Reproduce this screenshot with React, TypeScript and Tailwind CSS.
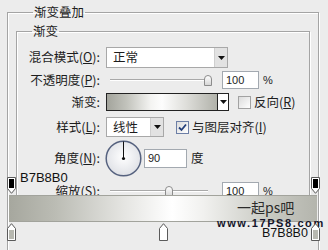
import React from 'react';

const cjk = "font-['Noto_Sans_CJK_SC',sans-serif]";
const latin = "font-['Liberation_Sans',Arial,sans-serif]";

function Caret() {
  return (
    <svg width="7" height="4" viewBox="0 0 7 4">
      <path d="M0 0 H7 L3.5 4 Z" fill="#111" />
    </svg>
  );
}

function Dropdown({ className, value }: { className: string; value: string }) {
  return (
    <div className={`flex h-full border border-[#a8a8a8] bg-white ${className}`}>
      <div className="flex flex-1 items-center pl-[6px] text-[12.5px]">{value}</div>
      <div className="flex w-[13px] items-center justify-center border-l border-[#cfcfcf] bg-[#e2e2e2]">
        <Caret />
      </div>
    </div>
  );
}

function Slider({ thumb }: { thumb: string }) {
  return (
    <div className="relative h-full w-[106px]">
      <div className="absolute left-[4px] right-[4px] top-[8px] h-[2px] border-t border-[#a9a9a9] border-b border-b-white" />
      <div className={`absolute top-[4px] h-[11px] w-[8px] rounded-t-full border border-[#8c8c8c] bg-gradient-to-b from-white to-[#d6d6d6] ${thumb}`} />
    </div>
  );
}

function Field({ value, className }: { value: string; className: string }) {
  return (
    <div className={`flex items-center border border-[#a3a9b0] bg-white pl-[3px] text-[11px] ${latin} ${className}`}>
      {value}
    </div>
  );
}

function Checkbox({ checked }: { checked?: boolean }) {
  return (
    <div
      className={`flex h-[13px] w-[13px] items-center justify-center border bg-gradient-to-br from-[#dcdcdc] to-white ${
        checked ? 'border-[#6d7fa6]' : 'border-[#a2a2a2]'
      }`}
    >
      {checked && (
        <svg width="9" height="9" viewBox="0 0 9 9">
          <path d="M1 4.5 L3.5 7 L8 1.5" fill="none" stroke="#233f7a" strokeWidth="1.8" />
        </svg>
      )}
    </div>
  );
}

function Dial() {
  return (
    <svg width="37" height="37" viewBox="0 0 37 37">
      <defs>
        <radialGradient id="dialFill" cx="50%" cy="45%" r="55%">
          <stop offset="0%" stopColor="#ffffff" />
          <stop offset="100%" stopColor="#dfe1e6" />
        </radialGradient>
      </defs>
      <circle cx="18.5" cy="18.5" r="17.3" fill="url(#dialFill)" stroke="#56627f" strokeWidth="1.5" />
      <line x1="18.5" y1="18.5" x2="18.5" y2="1.5" stroke="#111" strokeWidth="1" />
      <circle cx="18.5" cy="18.5" r="1.6" fill="#111" />
    </svg>
  );
}

function TopStop() {
  return (
    <svg width="9" height="17" viewBox="0 0 9 17">
      <path d="M0.5 0.5 H8.5 V11.5 L4.5 16.3 L0.5 11.5 Z" fill="#fff" stroke="#5a5a5a" />
      <rect x="2" y="2" width="5" height="9" fill="#000" />
    </svg>
  );
}

function BottomStop({ fill }: { fill: string }) {
  return (
    <svg width="9" height="18" viewBox="0 0 9 18">
      <path d="M4.5 0.7 L8.5 5.5 V17.5 H0.5 V5.5 Z" fill="#fff" stroke="#5a5a5a" />
      <rect x="2" y="7" width="5" height="9" fill={fill} />
    </svg>
  );
}

const Label = ({ children }: { children: React.ReactNode }) => (
  <div className="flex w-[83px] items-center justify-end text-[12.5px] leading-none">{children}</div>
);

const U = ({ c }: { c: string }) => <span className="underline underline-offset-[1px]">{c}</span>;

export default function App() {
  return (
    <div className={`relative h-[250px] w-[328px] overflow-hidden bg-[#ececec] text-[#1d1d1d] ${cjk}`}>
      <div className="pl-[7px] pr-[9px] pt-[5px]">
        <fieldset className="h-[270px] border border-[#a4a4a4] px-[8px] shadow-[inset_1px_1px_0_#fff,1px_1px_0_#fff]">
          <legend className="ml-[17px] px-[1px] text-[12.5px] leading-[14px]">渐变叠加</legend>
          <fieldset className="mt-[5px] h-[260px] border border-[#a4a4a4] shadow-[inset_1px_1px_0_#fff,1px_1px_0_#fff]">
            <legend className="ml-[15px] px-[1px] text-[12.5px] leading-[14px]">渐变</legend>

            <div className="mt-[9px] flex flex-col">
              <div className="flex h-[21px] gap-[6px]">
                <Label>混合模式(<U c="O" />):</Label>
                <Dropdown className="w-[122px]" value="正常" />
              </div>

              <div className="mt-[3px] flex h-[18px] gap-[6px]">
                <Label>不透明度(<U c="P" />):</Label>
                <Slider thumb="left-[98px]" />
                <Field className="ml-[4px] h-full w-[37px]" value="100" />
                <span className={`ml-[-2px] flex items-center text-[11px] ${latin}`}>%</span>
              </div>

              <div className="mt-[4px] flex h-[18px] items-center">
                <Label>渐变:</Label>
                <div className="ml-[6px] flex h-full w-[123px] border border-[#222]">
                  <div className="flex-1 bg-[linear-gradient(to_right,#a3a49c_0%,#c2c3bc_18%,#f4f4f2_40%,#fdfdfd_50%,#dededa_72%,#b1b2aa_100%)]" />
                  <div className="flex w-[11px] items-center justify-center border-l border-[#222] bg-white">
                    <Caret />
                  </div>
                </div>
                <div className="ml-[9px]">
                  <Checkbox />
                </div>
                <span className="ml-[3px] text-[12.5px] leading-none">
                  反向(<U c="R" />)
                </span>
              </div>

              <div className="mt-[6px] flex h-[20px] items-center">
                <Label>样式(<U c="L" />):</Label>
                <Dropdown className="ml-[6px] w-[58px]" value="线性" />
                <div className="ml-[12px]">
                  <Checkbox checked />
                </div>
                <span className="ml-[3px] text-[12.5px] leading-none">
                  与图层对齐(<U c="I" />)
                </span>
              </div>

              <div className="mt-[3px] flex h-[36px] items-center">
                <Label>角度(<U c="N" />):</Label>
                <div className="ml-[5px]">
                  <Dial />
                </div>
                <Field className="ml-[2px] h-[19px] w-[43px]" value="90" />
                <span className="ml-[4px] text-[12.5px] leading-none">度</span>
              </div>

              <div className="mt-[6px] flex h-[18px] gap-[6px]">
                <Label>缩放(<U c="S" />):</Label>
                <Slider thumb="left-[59px]" />
                <Field className="ml-[4px] h-full w-[37px]" value="100" />
                <span className={`ml-[-2px] flex items-center text-[11px] ${latin}`}>%</span>
              </div>
            </div>
          </fieldset>
        </fieldset>
      </div>

      {/* gradient editor strip pasted over the dialog */}
      <div className="absolute left-[9px] top-[222px] h-[28px] w-[308px] bg-[#ececec]" />
      <div className={`absolute left-[20px] top-[171px] text-[13px] leading-[13px] text-[#111] ${latin}`}>B7B8B0</div>
      <div className="absolute left-[7px] top-[177px]">
        <TopStop />
      </div>
      <div className="absolute left-[311px] top-[177px]">
        <TopStop />
      </div>
      <div className="absolute left-[9px] top-[195px] h-[27px] w-[308px] border-y border-[#a2a39c] bg-[linear-gradient(to_right,#a6a79e_0%,#bbbcb4_15%,#e6e6e3_38%,#ffffff_53%,#f1f1ef_63%,#c9cac3_84%,#b4b5ad_100%)]" />
      <div className="absolute left-[237px] top-[200px] text-[14px] leading-[15px] text-[#2b2b2b]">一起ps吧</div>
      <div className={`absolute left-[217px] top-[219px] text-[11px] font-black leading-[8px] tracking-[1.6px] text-[#14142a] ${latin}`}>
        www.17PS8.com
      </div>
      <div className="absolute left-[7px] top-[223px]">
        <BottomStop fill="#b7b8b0" />
      </div>
      <div className="absolute left-[159px] top-[223px]">
        <BottomStop fill="#ffffff" />
      </div>
      <div className="absolute left-[311px] top-[223px]">
        <BottomStop fill="#b7b8b0" />
      </div>
      <div className={`absolute left-[262px] top-[228px] text-[12.5px] leading-[11px] text-[#111] ${latin}`}>B7B8B0</div>
    </div>
  );
}
